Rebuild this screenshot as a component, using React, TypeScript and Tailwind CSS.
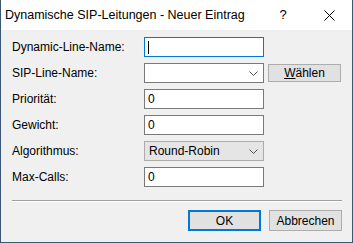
const font = { fontFamily: '"Segoe UI", "Liberation Sans", Arial, sans-serif' };

function Label({ text }: { text: string }) {
  return <div className="w-[132px] text-[12px] text-black">{text}</div>;
}

function TextBox({ value, focused }: { value: string; focused?: boolean }) {
  return (
    <div
      className={`w-[120px] h-[20px] bg-white border flex items-center pl-[3px] text-[12px] text-black ${
        focused ? "border-[#0078d7]" : "border-[#7a7a7a]"
      }`}
    >
      {focused ? <span className="w-px h-[13px] bg-black" /> : value}
    </div>
  );
}

function Combo({ value, flat }: { value: string; flat?: boolean }) {
  return (
    <div
      className={`w-[120px] h-[20px] border flex items-center justify-between pl-[4px] pr-[5px] text-[12px] text-black ${
        flat ? "bg-[#e5e5e5] border-[#acacac]" : "bg-white border-[#7a7a7a]"
      }`}
    >
      <span>{value}</span>
      <svg width="9" height="5" viewBox="0 0 9 5">
        <path d="M0.5 0.5 L4.5 4.5 L8.5 0.5" fill="none" stroke="#505050" strokeWidth="1" />
      </svg>
    </div>
  );
}

export default function App() {
  return (
    <div
      className="w-[353px] h-[243px] flex flex-col border-x border-b border-[#3b5775] bg-[#f0f0f0]"
      style={font}
    >
      <div className="h-[30px] bg-white flex items-center pl-[4px] text-[12.5px] text-black">
        <span className="flex-1">Dynamische SIP-Leitungen - Neuer Eintrag</span>
        <span className="w-[46px] text-center text-[13px]">?</span>
        <span className="w-[46px] flex justify-center">
          <svg width="11" height="11" viewBox="0 0 11 11">
            <path d="M0.5 0.5 L10.5 10.5 M10.5 0.5 L0.5 10.5" stroke="#000" strokeWidth="1" />
          </svg>
        </span>
      </div>

      <div className="flex-1 flex flex-col pt-[7px] pl-[11px]">
        <div className="flex flex-col gap-[6px]">
          <div className="flex items-center">
            <Label text="Dynamic-Line-Name:" />
            <TextBox value="" focused />
          </div>
          <div className="flex items-center">
            <Label text="SIP-Line-Name:" />
            <Combo value="" />
            <button className="ml-[4px] w-[73px] h-[18px] bg-[#e1e1e1] border border-[#adadad] text-[12px] text-black leading-none">
              <span className="underline">W</span>ählen
            </button>
          </div>
          <div className="flex items-center">
            <Label text="Priorität:" />
            <TextBox value="0" />
          </div>
          <div className="flex items-center">
            <Label text="Gewicht:" />
            <TextBox value="0" />
          </div>
          <div className="flex items-center">
            <Label text="Algorithmus:" />
            <Combo value="Round-Robin" flat />
          </div>
          <div className="flex items-center">
            <Label text="Max-Calls:" />
            <TextBox value="0" />
          </div>
        </div>

        <div className="mt-[13px] w-[330px] border-t border-[#a0a0a0] border-b border-b-white" />

        <div className="mt-[8px] w-[330px] flex justify-end gap-[8px]">
          <button className="w-[73px] h-[21px] bg-[#e1e1e1] border-2 border-[#0078d7] text-[12px] text-black">
            OK
          </button>
          <button className="w-[73px] h-[21px] bg-[#e1e1e1] border border-[#adadad] text-[12px] text-black">
            Abbrechen
          </button>
        </div>
      </div>
    </div>
  );
}
